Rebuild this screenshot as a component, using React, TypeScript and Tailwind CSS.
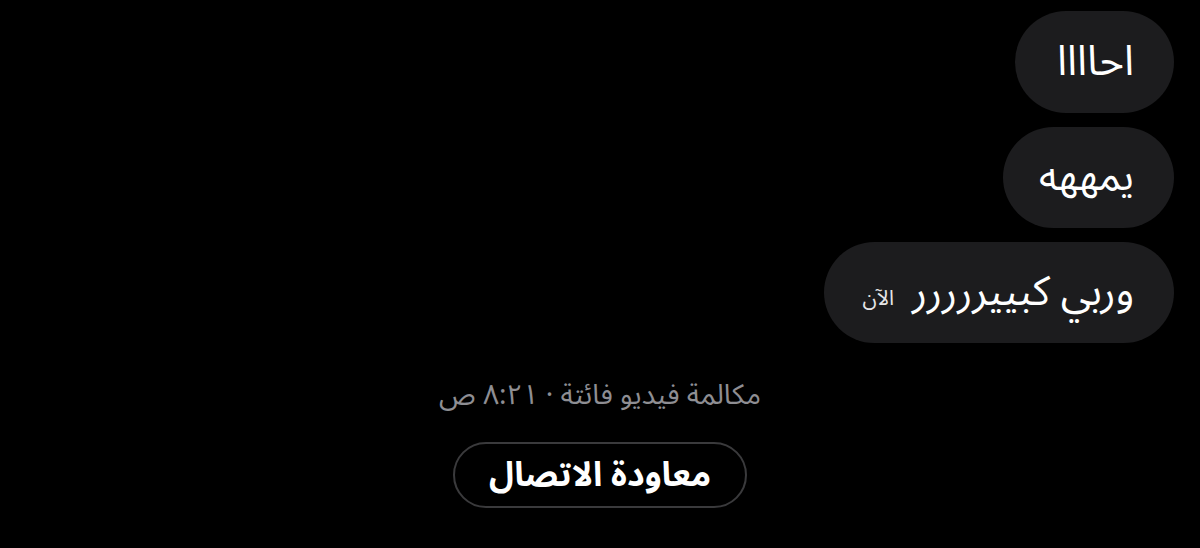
export default function App() {
  return (
    <div
      dir="rtl"
      className="w-[1200px] h-[548px] bg-black text-white overflow-hidden"
      style={{ fontFamily: '"Noto Sans Arabic", "Noto Sans", "DejaVu Sans", sans-serif' }}
    >
      {/* Messages */}
      <div className="flex flex-col items-start gap-[14px] pt-[11px] pr-[26px]">
        <div className="h-[102px] pr-10 pl-[42px] flex items-center rounded-full bg-[#1c1c1e] text-[42px] leading-none">
          احاااا
        </div>
        <div className="h-[101px] pr-10 pl-[36px] flex items-center rounded-full bg-[#1c1c1e] text-[40px] leading-none">
          يمههه
        </div>
        <div className="h-[101px] pr-10 pl-[38px] flex items-center gap-[18px] rounded-full bg-[#1c1c1e]">
          <span className="text-[41px] leading-none">وربي كبييررررر</span>
          <span className="text-[21px] leading-none text-[#e5e5e7] mt-3">الآن</span>
        </div>
      </div>

      {/* Missed call */}
      <div className="flex flex-col items-center mt-[36px]">
        <p className="text-[28px] leading-[34px] text-[#8e8e93]">مكالمة فيديو فائتة · ٨:٢١ ص</p>
        <button className="mt-[29px] w-[294px] h-[66px] rounded-full border-2 border-[#3a3a3c] text-[34px] leading-none font-bold text-white flex items-center justify-center">
          معاودة الاتصال
        </button>
      </div>
    </div>
  )
}
